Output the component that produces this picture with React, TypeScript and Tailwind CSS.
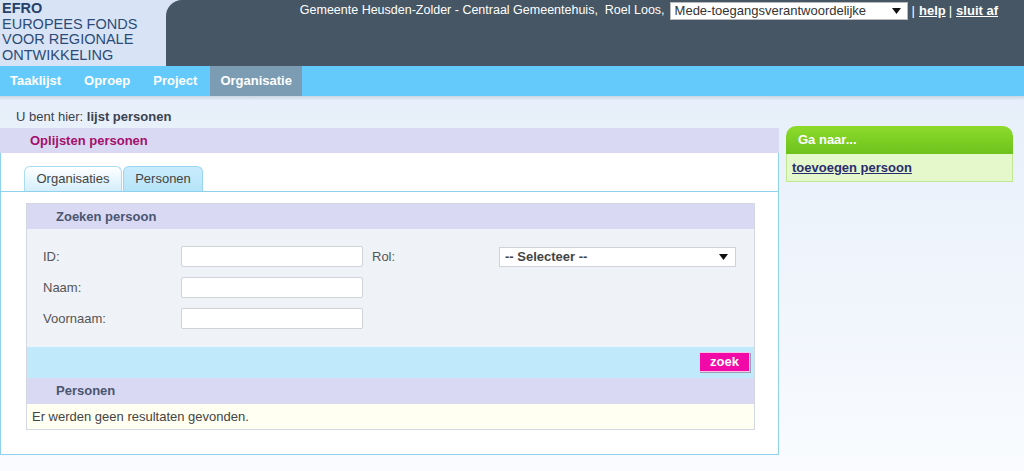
import React from "react";

const font = { fontFamily: '"Liberation Sans", Arial, sans-serif' };

function Input({ w = "w-[182px]" }: { w?: string }) {
  return <div className={`${w} h-[21px] bg-white border border-[#cfd3d8] rounded-[2px]`} />;
}

export default function App() {
  return (
    <div
      style={font}
      className="w-[1024px] h-[471px] overflow-hidden bg-gradient-to-b from-[#e2ecf9] to-[#f9fbfe] text-[13px] text-[#333]"
    >
      {/* Header */}
      <div className="flex h-[66px] bg-[#d8e4f6]">
        <div className="w-[166px] pl-[2px] pt-[1px] text-[14.5px] leading-[15.5px] text-[#2c4b78]">
          <div className="font-bold text-[#27416a]">EFRO</div>
          <div>EUROPEES FONDS</div>
          <div>VOOR REGIONALE</div>
          <div>ONTWIKKELING</div>
        </div>
        <div className="flex-1 bg-[#465664] rounded-tl-[16px]">
          <div className="flex justify-end items-center pr-[26px] pt-[1px] h-[20px] text-white text-[13px] whitespace-nowrap">
            <span className="text-[12.5px]">Gemeente Heusden-Zolder - Centraal Gemeentehuis,&nbsp;&nbsp;Roel Loos,</span>
            <div className="ml-[5px] w-[238px] h-[18px] bg-white border border-[#bbb] flex items-center justify-between pl-[4px] pr-[6px] text-[#333]">
              <span>Mede-toegangsverantwoordelijke</span>
              <svg width="9" height="6" viewBox="0 0 9 6"><path d="M0 0h9L4.5 6z" fill="#111" /></svg>
            </div>
            <span className="ml-[4px]">|</span>
            <span className="ml-[4px] font-bold underline">help</span>
            <span className="ml-[3px]">|</span>
            <span className="ml-[4px] font-bold underline">sluit af</span>
          </div>
        </div>
      </div>

      {/* Nav */}
      <div className="flex h-[30px] bg-[#64cafb] gap-[3px]">
        {["Taaklijst", "Oproep", "Project"].map((t) => (
          <div key={t} className="px-[10px] flex items-center text-white font-bold text-[13px]">
            {t}
          </div>
        ))}
        <div className="px-[10px] flex items-center text-white font-bold text-[13px] bg-[#7b9cb2]">Organisatie</div>
      </div>
      <div className="h-[4px] bg-gradient-to-b from-[#c9d5e0] to-[#e2ecf9]" />

      {/* Body */}
      <div className="flex">
        <div className="w-[779px]">
          <div className="h-[28px] pt-[9px] pl-[16px] leading-[16px] text-[#3a4250]">
            U bent hier: <span className="font-bold">lijst personen</span>
          </div>
          <div className="h-[25px] bg-[#d9d9f3] flex items-center pl-[30px] font-bold text-[#a2106c]">
            Oplijsten personen
          </div>
          <div className="h-[302px] bg-white border-x border-b border-[#8ed2f0]">
            <div className="pt-[13px] pl-[23px] flex border-b border-[#8ed2f0]">
              <div className="w-[98px] h-[25px] border border-b-0 border-[#a9dcf2] rounded-t-[6px] bg-gradient-to-b from-white to-[#d3eefb] flex items-center justify-center text-[#444]">
                Organisaties
              </div>
              <div className="ml-[1px] w-[80px] h-[25px] border border-b-0 border-[#9ad6f1] rounded-t-[6px] bg-gradient-to-b from-[#c9ecfc] to-[#b6e4f9] flex items-center justify-center text-[#444]">
                Personen
              </div>
            </div>

            <div className="mt-[11px] ml-[25px] w-[729px] border border-[#d3d7df]">
              <div className="h-[25px] bg-[#d9d9f3] flex items-center pl-[29px] font-bold text-[#4a5570]">
                Zoeken persoon
              </div>
              <div className="bg-[#eff2f6] pt-[17px] pb-[18px] px-[16px] flex flex-col gap-[10px] text-[#555]">
                <div className="flex items-center h-[21px]">
                  <div className="w-[138px]">ID:</div>
                  <Input />
                  <div className="ml-[9px] w-[127px]">Rol:</div>
                  <div className="w-[237px] h-[20px] bg-white border border-[#cfd3d8] flex items-center justify-between pl-[5px] pr-[7px] text-[#444] font-bold">
                    <span>-- Selecteer --</span>
                    <svg width="9" height="6" viewBox="0 0 9 6"><path d="M0 0h9L4.5 6z" fill="#111" /></svg>
                  </div>
                </div>
                <div className="flex items-center h-[21px]">
                  <div className="w-[138px]">Naam:</div>
                  <Input />
                </div>
                <div className="flex items-center h-[21px]">
                  <div className="w-[138px]">Voornaam:</div>
                  <Input />
                </div>
              </div>
              <div className="h-[31px] bg-[#c0e9fb] flex justify-end items-start pt-[5px] pr-[4px]">
                <div className="w-[51px] h-[20px] bg-[#f20aa8] text-white font-bold flex items-center justify-center shadow-[1px_1px_0_#9c9cb4] border border-[#f7c6e6]">
                  zoek
                </div>
              </div>
              <div className="h-[26px] bg-[#d9d9f3] flex items-center pl-[29px] font-bold text-[#4a5570]">
                Personen
              </div>
              <div className="h-[25px] bg-[#fffff2] flex items-center pl-[5px] text-[#444]">
                Er werden geen resultaten gevonden.
              </div>
            </div>
          </div>
        </div>

        <div className="ml-[7px] mt-[26px] w-[227px]">
          <div className="h-[28px] rounded-t-[10px] bg-gradient-to-b from-[#8edb2c] to-[#6cc21c] flex items-center pl-[12px] text-white font-bold">
            Ga naar...
          </div>
          <div className="h-[28px] bg-[#e4f8cc] border border-t-0 border-[#bfe891] flex items-center pl-[5px]">
            <span className="font-bold underline text-[#2b2d6f]">toevoegen persoon</span>
          </div>
        </div>
      </div>
    </div>
  );
}
